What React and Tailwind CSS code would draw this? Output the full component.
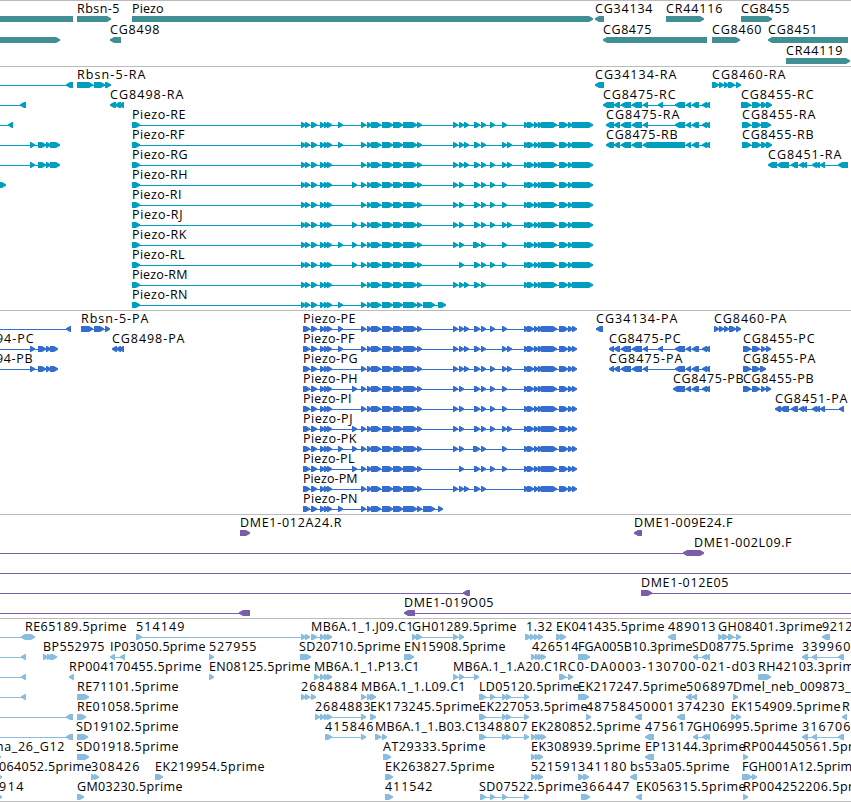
import React from 'react';
import clsx from 'clsx';

const VIEW_WIDTH = 851;
const HEAD = 4;

// f(label, [start, end] of the label, strand, exons, optional [start, end] of the intron line)
const f = (label, span, strand, exons, line) => ({ label, span, strand, exons, line });

// ---- Genes ----
const GENES = [
    [
        f('', null, '-', [[-10, 73]]),
        f('Rbsn-5', [77, 119], '+', [[77, 111]]),
        f('Piezo', [132, 163], '+', [[132, 593]]),
        f('CG34134', [595, 652], '-', [[595, 604]]),
        f('CR44116', [666, 722], '+', [[666, 704]]),
        f('CG8455', [741, 789], '+', [[741, 772]]),
    ],
    [
        f('', null, '+', [[-10, 60]]),
        f('CG8498', [110, 159], '-', [[110, 121]]),
        f('CG8475', [603, 651], '-', [[603, 707]]),
        f('CG8460', [712, 761], '+', [[712, 740]]),
        f('CG8451', [768, 817], '-', [[768, 848]]),
    ],
    [f('CR44119', [786, 842], '+', [[786, 850]])],
];

// ---- Piezo isoforms ----
const PIEZO_HEAD = [[311, 317], [320, 325], [324, 329], [327, 332]];
const PIEZO_MID = [[361, 366], [367, 372], [371, 381], [382, 393], [393, 403], [403, 417], [417, 422]];
const PIEZO_TAIL = [[524, 529], [527, 534], [534, 539], [538, 543], [541, 557], [559, 568], [568, 573]];

// early and late are the starts of the optional single exons
const ISOFORMS = {
    E: { early: [338], late: [453, 459, 464, 490, 502], rEnd: 185, pEnd: 355 },
    F: { early: [338], late: [453, 459, 464, 502, 507], rEnd: 184, pEnd: 354 },
    G: { early: [], late: [453, 459, 464, 490, 502, 507], rEnd: 187, pEnd: 357 },
    H: { early: [352], late: [453, 459, 490, 502], rEnd: 187, pEnd: 357 },
    I: { early: [], late: [453, 459, 490, 502], rEnd: 181, pEnd: 351 },
    J: { early: [352], late: [453, 459, 490, 502, 507], rEnd: 182, pEnd: 352 },
    K: { early: [338, 352], late: [453, 459, 502], rEnd: 186, pEnd: 356 },
    L: { early: [352], late: [459, 490, 502], rEnd: 184, pEnd: 354 },
    M: { early: [], late: [453, 459, 464], rEnd: 187, pEnd: 357 },
    N: { early: [338], late: [], rEnd: 187, pEnd: 357 },
};

const single = (start) => [start, start + 5];

const piezo = (kind, letter) => {
    const iso = ISOFORMS[letter];
    const isRna = kind === 'R';
    const start = isRna ? [[132, 140], [301, 306], [305, 310]] : [[303, 310]];
    let end;
    if (letter === 'N') {
        end = [[423, 435], isRna ? [438, 446] : [438, 443]];
    } else {
        end = [
            ...iso.late.map(single),
            [letter === 'K' ? 473 : 474, 480],
            [481, 486],
            ...PIEZO_TAIL,
            [572, isRna ? 593 : 577],
        ];
    }
    const exons = [...start, ...PIEZO_HEAD, ...iso.early.map(single), ...PIEZO_MID, ...end];
    const from = isRna ? 132 : 303;
    const to = exons[exons.length - 1][1];
    return f(`Piezo-${kind}${letter}`, [from, isRna ? iso.rEnd : iso.pEnd], '+', exons, [from, to - 3]);
};

// ---- Exon groups shared by several transcripts ----
const CG8475_LEFT = [[614, 620], [621, 631], [632, 642]];
const CG8475_RIGHT = [[686, 691], [692, 699], [702, 707], [705, 710]];
const CG8451_MID = [[791, 798], [799, 804], [802, 807], [812, 817], [815, 820], [820, 825]];
const UTR_EXONS = [[30, 35], [38, 46], [46, 51]];

const TRANSCRIPTS = [
    [
        f('', null, '-', [[66, 73]], [0, 66]),
        f('Rbsn-5-RA', [77, 145], '+', [[77, 93], [94, 105], [105, 111]], [77, 108]),
        f('CG34134-RA', [595, 676], '-', [[595, 604]]),
        f('CG8460-RA', [712, 785], '+', [[712, 719], [719, 724], [724, 729], [728, 735], [736, 741]], [712, 738]),
    ],
    [
        f('', null, '-', [[20, 26]], [0, 20]),
        f('CG8498-RA', [110, 183], '-', [[110, 116], [115, 121], [119, 124]]),
        f('CG8475-RC', [603, 675], '-', [[603, 614], ...CG8475_LEFT, [643, 648], [658, 663], [675, 685], ...CG8475_RIGHT], [606, 710]),
        f('CG8455-RC', [741, 813], '+', [[741, 751], [752, 761], [761, 767], [766, 772]], [741, 769]),
    ],
    [
        f('', null, '-', [[8, 13]], [0, 8]),
        piezo('R', 'E'),
        f('CG8475-RA', [606, 679], '-', [[606, 614], ...CG8475_LEFT, [643, 648], [675, 685], ...CG8475_RIGHT], [608, 710]),
        f('CG8455-RA', [742, 815], '+', [[742, 751], [752, 761], [761, 771]], [742, 768]),
    ],
    [
        f('', null, '+', [...UTR_EXONS, [50, 60]], [0, 57]),
        piezo('R', 'F'),
        f('CG8475-RB', [606, 677], '-', [[606, 614], ...CG8475_LEFT, [643, 685], ...CG8475_RIGHT], [608, 710]),
        f('CG8455-RB', [742, 813], '+', [[742, 751], [752, 761], [761, 767], [766, 772]], [742, 769]),
    ],
    [
        f('', null, '+', [...UTR_EXONS, [50, 60]], [0, 57]),
        piezo('R', 'G'),
        f('CG8451-RA', [768, 841], '-', [[768, 777], [777, 789], ...CG8451_MID, [838, 848]], [770, 848]),
    ],
    [f('', null, '+', [[-6, 6]]), piezo('R', 'H')],
    [piezo('R', 'I')],
    [piezo('R', 'J')],
    [piezo('R', 'K')],
    [piezo('R', 'L')],
    [piezo('R', 'M')],
    [piezo('R', 'N')],
];

const PROTEINS = [
    [
        f('', null, '-', [[66, 71]], [0, 66]),
        f('Rbsn-5-PA', [81, 148], '+', [[81, 93], [94, 104], [105, 110]], [81, 107]),
        piezo('P', 'E'),
        f('CG34134-PA', [596, 677], '-', [[596, 603]]),
        f('CG8460-PA', [714, 786], '+', [[714, 719], [719, 724], [724, 729], [729, 736], [736, 741]], [714, 738]),
    ],
    [
        f('94-PC', [-4, 33], '+', [...UTR_EXONS, [50, 58]], [0, 55]),
        f('CG8498-PA', [112, 184], '-', [[112, 117], [116, 121], [119, 124]]),
        piezo('P', 'F'),
        f('CG8475-PC', [609, 680], '-', [[609, 614], ...CG8475_LEFT, [643, 648], [658, 663], [675, 685], ...CG8475_RIGHT], [612, 710]),
        f('CG8455-PC', [743, 814], '+', [[743, 751], [752, 760], [761, 766], [766, 771]], [743, 768]),
    ],
    [
        f('94-PB', [-4, 32], '+', [...UTR_EXONS, [50, 58]], [0, 55]),
        piezo('P', 'G'),
        f('CG8475-PA', [609, 682], '-', [[609, 614], ...CG8475_LEFT, [643, 648], [675, 685], ...CG8475_RIGHT], [612, 710]),
        f('CG8455-PA', [743, 815], '+', [[743, 751], [752, 760], [760, 766]], [743, 763]),
    ],
    [
        piezo('P', 'H'),
        f('CG8475-PB', [673, 743], '-', [[673, 685], ...CG8475_RIGHT], [676, 710]),
        f('CG8455-PB', [743, 813], '+', [[743, 751], [752, 760], [761, 766], [766, 771]], [743, 768]),
    ],
    [
        piezo('P', 'I'),
        f('CG8451-PA', [775, 847], '-', [[775, 781], [780, 789], ...CG8451_MID, [839, 844]], [778, 844]),
    ],
    [piezo('P', 'J')],
    [piezo('P', 'K')],
    [piezo('P', 'L')],
    [piezo('P', 'M')],
    [piezo('P', 'N')],
];

const BACS = [
    [
        f('DME1-012A24.R', [240, 341], '+', [[240, 250]]),
        f('DME1-009E24.F', [634, 732], '-', [[634, 642]]),
    ],
    [f('DME1-002L09.F', [694, 791], '*', [[683, 704]], [0, 686])],
    [f('', null, '+', [], [0, 851])],
    [
        f('', null, '-', [[463, 470]], [0, 465]),
        f('DME1-012E05', [641, 728], '+', [[641, 652]], [648, 851]),
    ],
    [
        f('', null, '-', [[239, 250]], [0, 242]),
        f('DME1-019O05', [404, 493], '-', [[404, 415]], [410, 851]),
    ],
];

const FOUR = [[531, 536], [535, 540], [538, 543], [541, 546]];
const LD_EXONS = [[502, 507], [506, 511], [524, 529]];
const SD_EXONS = [[693, 698], [702, 707], [705, 710]];
const EDGE_EXONS = [[802, 808], [812, 817], [838, 844]];

const ESTS = [
    [
        f('RE65189.5prime', [25, 126], '*', [[21, 35]], [0, 24]),
        f('514149', [136, 184], '+', [[136, 142], [301, 306], [305, 310]], [136, 307]),
        f('MB6A.1_1.J09.C1', [311, 413], '+', PIEZO_HEAD, [311, 329]),
        f('GH01289.5prime', [412, 516], '+', [[412, 417], [416, 422], [453, 458], [459, 464]], [412, 461]),
        f('1.32', [526, 552], '+', [[525, 531], [530, 535], [534, 539], [538, 543]], [525, 540]),
        f('EK041435.5prime', [556, 664], '+', [[556, 562], [560, 566]]),
        f('489013', [668, 715], '-', [[668, 676]]),
        f('GH08401.3prime', [718, 822], '+', [[718, 723], [722, 728], [728, 734], [736, 741]], [718, 738]),
        f('9212', [822, 852], '-', [[822, 830]]),
    ],
    [
        f('', null, '-', [[21, 26]], [0, 24]),
        f('BP552975', [43, 104], '+', [[43, 48], [47, 52], [50, 57]], [43, 54]),
        f('IP03050.5prime', [110, 205], '-', [[110, 115], [120, 125]], [112, 122]),
        f('527955', [209, 256], '+', [[209, 214]]),
        f('SD20710.5prime', [299, 400], '+', [[300, 311]]),
        f('EN15908.5prime', [404, 505], '+', [[404, 414]]),
        f('426514', [532, 578], '+', FOUR, [531, 543]),
        f('FGA005B10.3prime', [578, 692], '+', [[578, 590]]),
        f('SD08775.5prime', [692, 793], '-', SD_EXONS, [696, 710]),
        f('339960', [802, 850], '-', EDGE_EXONS, [805, 844]),
    ],
    [
        f('', null, '-', [[21, 26]], [0, 24]),
        f('RP004170455.5prime', [69, 201], '-', [[69, 74]]),
        f('EN08125.5prime', [209, 310], '+', [[209, 214]]),
        f('MB6A.1_1.P13.C1', [314, 419], '+', [[314, 319], [320, 325], [324, 329], [327, 332]], [314, 329]),
        f('MB6A.1_1.A20.C1', [453, 559], '+', [[453, 458], [459, 464], [474, 479]], [453, 476]),
        f('RC0-DA0003-130700-021-d03', [559, 755], '+', [[559, 566], [568, 573]], [559, 570]),
        f('RH42103.3prime', [758, 861], '+', [[758, 763], [760, 771]]),
    ],
    [
        f('', null, '-', [[21, 26]], [0, 24]),
        f('RE71101.5prime', [77, 178], '+', [[77, 89]]),
        f('2684884', [301, 357], '+', [[301, 306], [305, 310], [311, 316]], [301, 313]),
        f('MB6A.1_1.L09.C1', [361, 465], '+', [[361, 366], [367, 372], [370, 376]], [361, 373]),
        f('LD05120.5prime', [479, 579], '+', [[479, 486], [490, 495], ...LD_EXONS], [479, 526]),
        f('EK217247.5prime', [578, 686], '+', [[578, 589]]),
        f('506897', [686, 733], '-', [[686, 692], [692, 697]]),
        f('Dmel_neb_009873_', [733, 850], '+', [[733, 738]]),
    ],
    [
        f('', null, '-', [[66, 73]], [0, 69]),
        f('RE01058.5prime', [77, 178], '+', [[77, 86]]),
        f('2684883', [315, 370], '+', [[315, 320], [320, 325], [324, 329], [327, 332], [361, 366]], [315, 363]),
        f('EK173245.5prime', [370, 479], '+', [[370, 376]]),
        f('EK227053.5prime', [479, 587], '+', [[479, 486], ...LD_EXONS], [479, 526]),
        f('487584', [586, 634], '+', [[586, 591]]),
        f('50001', [635, 674], '-', [[635, 642]]),
        f('374230', [677, 724], '-', [[677, 685]]),
        f('EK154909.5prime', [731, 840], '+', [[731, 736], [736, 741]]),
        f('R', [842, 850], '-', [[842, 847]]),
    ],
    [
        f('', null, '-', [[66, 73]], [0, 69]),
        f('SD19102.5prime', [76, 178], '+', [[77, 88]]),
        f('415846', [325, 373], '+', [[325, 332], [361, 366]], [325, 363]),
        f('MB6A.1_1.B03.C1', [375, 480], '+', [[375, 381], [382, 387]], [375, 384]),
        f('348807', [479, 527], '+', [[479, 486], ...LD_EXONS], [479, 526]),
        f('EK280852.5prime', [531, 640], '+', FOUR, [531, 543]),
        f('475617', [645, 693], '-', [[645, 654]]),
        f('GH06995.5prime', [693, 797], '-', SD_EXONS, [696, 710]),
        f('316706', [802, 850], '-', EDGE_EXONS, [805, 844]),
    ],
    [
        f('ma_26_G12', [-8, 64], '+', [[-4, 1]]),
        f('SD01918.5prime', [76, 178], '+', [[77, 89]]),
        f('AT29333.5prime', [383, 485], '+', [[383, 391]]),
        f('EK308939.5prime', [531, 640], '+', FOUR.slice(0, 3), [531, 540]),
        f('EP13144.3prime', [645, 745], '-', [[645, 654]]),
        f('RP004450561.5prime', [743, 876], '+', [[743, 748]]),
    ],
    [
        f('064052.5prime', [-1, 91], '+', [[-3, 2]]),
        f('308426', [91, 139], '+', [[91, 96], [94, 99]]),
        f('EK219954.5prime', [155, 264], '+', [[155, 163]]),
        f('EK263827.5prime', [385, 494], '+', [[385, 393]]),
        f('521591', [531, 577], '+', FOUR.slice(0, 3), [531, 540]),
        f('341180', [578, 626], '+', [[578, 584], [583, 589]]),
        f('bs53a05.5prime', [630, 729], '-', [[630, 637]]),
        f('FGH001A12.5prime', [742, 859], '+', [[742, 752], [752, 757]], [742, 754]),
    ],
    [
        f('914', [-1, 23], '+', [[-3, 2]]),
        f('GM03230.5prime', [77, 182], '+', [[77, 84]]),
        f('411542', [385, 432], '+', [[385, 393]]),
        f('SD07522.5prime', [479, 581], '+', [[480, 486], [490, 495], [502, 507], [524, 529]], [480, 526]),
        f('366447', [581, 629], '+', [[581, 590]]),
        f('EK056315.5prime', [636, 745], '-', [[636, 642]]),
        f('RP004252206.5prime', [743, 876], '+', [[743, 748]]),
    ],
];

const TRACKS = [
    { id: 'genes', rows: GENES, pitch: 21, size: 'h-[66px]', color: 'text-[#3f8f94]' },
    { id: 'transcripts', rows: TRANSCRIPTS, pitch: 20, size: 'h-[244px]', color: 'text-[#009fc0]' },
    { id: 'proteins', rows: PROTEINS, pitch: 20, size: 'h-[204px]', color: 'text-[#336ecf]' },
    { id: 'bacs', rows: BACS, pitch: 20, size: 'h-[104px]', color: 'text-[#7a5ca8]' },
    { id: 'ests', rows: ESTS, pitch: 20, size: 'h-[184px] border-b', color: 'text-[#89bddf]' },
];

const exonPoints = ([start, end], strand, y) => {
    const left = strand === '+' ? start : start + HEAD;
    const right = strand === '-' ? end : end - HEAD;
    const points = [[left, y], [right, y]];
    if (strand !== '-') points.push([end, y + 2.2], [end, y + 3.8]);
    points.push([right, y + 6], [left, y + 6]);
    if (strand !== '+') points.push([start, y + 3.8], [start, y + 2.2]);
    return points.map((p) => p.join(',')).join(' ');
};

const Feature = ({ feature, top }) => {
    const { label, span, strand, exons, line } = feature;
    return (
        <g>
            {line && <rect x={line[0]} y={top + 18} width={line[1] - line[0]} height={1} fill="currentColor" />}
            {exons.map((exon, i) => (
                <polygon key={i} points={exonPoints(exon, strand, top + 15)} fill="currentColor" />
            ))}
            {label && (
                <text
                    x={span[0]}
                    y={top + 12}
                    textLength={span[1] - span[0] + 0.5}
                    className="fill-black"
                >
                    {label}
                </text>
            )}
        </g>
    );
};

const Track = ({ track }) => (
    <section className={clsx('w-full border-t border-[#bbbbbb] overflow-hidden', track.size)}>
        <svg
            width={VIEW_WIDTH}
            height="100%"
            className={clsx('block font-["Open_Sans",sans-serif] font-[380] text-[12.5px]', track.color)}
        >
            {track.rows.map((row, r) =>
                row.map((feature, i) => (
                    <Feature key={`${r}-${i}`} feature={feature} top={r * track.pitch} />
                ))
            )}
        </svg>
    </section>
);

const App = () => (
    <main className="flex flex-col w-[851px] h-[802px] bg-white overflow-hidden">
        {TRACKS.map((track) => (
            <Track key={track.id} track={track} />
        ))}
    </main>
);

export default App;
